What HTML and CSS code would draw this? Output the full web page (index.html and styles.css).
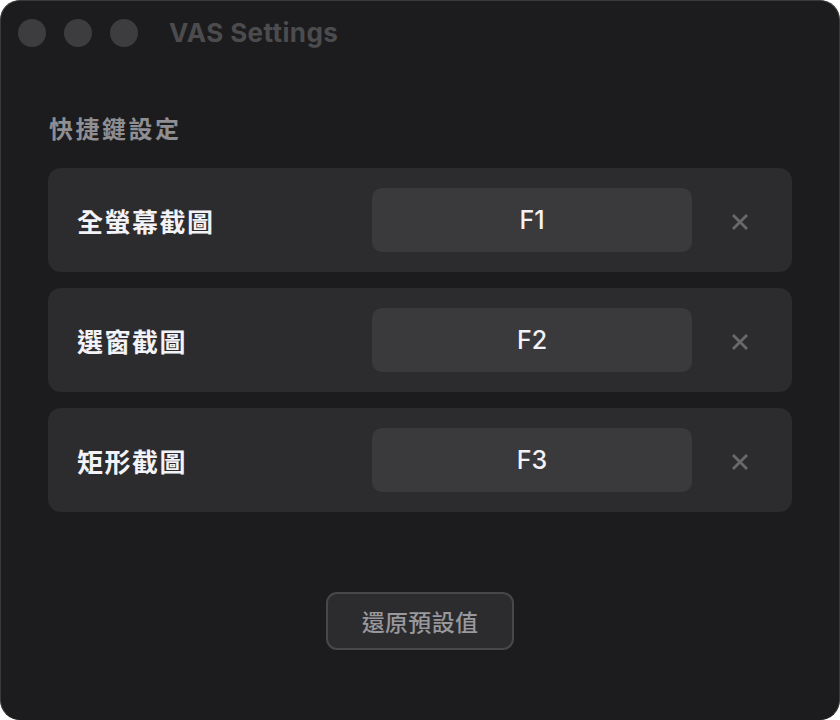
FILE: index.html
```html
<!DOCTYPE html>
<html lang="zh-Hant">
<head>
<meta charset="utf-8">
<title>VAS Settings</title>
<link rel="stylesheet" href="styles.css">
</head>
<body>
<div class="window">
  <header class="titlebar">
    <div class="lights">
      <span class="light"></span>
      <span class="light"></span>
      <span class="light"></span>
    </div>
    <div class="title">VAS Settings</div>
  </header>
  <main class="content">
    <h2 class="section">快捷鍵設定</h2>
    <div class="rows">
      <div class="row">
        <div class="label">全螢幕截圖</div>
        <div class="key">F1</div>
        <button class="clear" aria-label="清除"><svg width="16" height="16" viewBox="0 0 16 16"><path d="M2 2L14 14M14 2L2 14" stroke="#69696c" stroke-width="2.8" stroke-linecap="square" fill="none"/></svg></button>
      </div>
      <div class="row">
        <div class="label">選窗截圖</div>
        <div class="key">F2</div>
        <button class="clear" aria-label="清除"><svg width="16" height="16" viewBox="0 0 16 16"><path d="M2 2L14 14M14 2L2 14" stroke="#69696c" stroke-width="2.8" stroke-linecap="square" fill="none"/></svg></button>
      </div>
      <div class="row">
        <div class="label">矩形截圖</div>
        <div class="key">F3</div>
        <button class="clear" aria-label="清除"><svg width="16" height="16" viewBox="0 0 16 16"><path d="M2 2L14 14M14 2L2 14" stroke="#69696c" stroke-width="2.8" stroke-linecap="square" fill="none"/></svg></button>
      </div>
    </div>
    <div class="footer">
      <button class="reset">還原預設值</button>
    </div>
  </main>
</div>
</body>
</html>
```

FILE: styles.css
```css
html, body {
  margin: 0;
  padding: 0;
  background: #ffffff;
}
body {
  font-family: "Inter", "Noto Sans CJK TC", "Noto Sans", sans-serif;
}
.window {
  width: 840px;
  height: 720px;
  box-sizing: border-box;
  background: #1c1c1e;
  border-radius: 20px;
  border: 1px solid #3a3a3c;
  border-bottom-color: #1c1c1e;
  overflow: hidden;
  display: flex;
  flex-direction: column;
}
.titlebar {
  height: 63px;
  display: flex;
  align-items: center;
  padding-left: 17px;
  flex: none;
}
.lights {
  display: flex;
  gap: 18px;
}
.light {
  width: 28px;
  height: 28px;
  border-radius: 50%;
  background: #3d3d3f;
}
.title {
  margin-left: 31px;
  font-size: 26px;
  font-weight: 700;
  color: #4c4c4e;
  letter-spacing: 0.4px;
}
.content {
  padding: 0 47px;
  display: flex;
  flex-direction: column;
  flex: 1;
}
.section {
  margin: 49px 0 0 1px;
  font-size: 24px;
  line-height: 34px;
  font-weight: 700;
  color: #8e8e93;
  letter-spacing: 2.5px;
}
.rows {
  margin-top: 21px;
  display: flex;
  flex-direction: column;
  gap: 16px;
}
.row {
  height: 104px;
  box-sizing: border-box;
  background: #2c2c2e;
  border-radius: 13px;
  display: flex;
  align-items: center;
  padding-left: 29px;
  padding-right: 4px;
}
.label {
  flex: 1;
  font-size: 26px;
  font-weight: 700;
  color: #f2f2f7;
  letter-spacing: 1.5px;
}
.key {
  width: 320px;
  height: 64px;
  border-radius: 10px;
  background: #3a3a3c;
  color: #f2f2f7;
  font-size: 25px;
  font-weight: 500;
  display: flex;
  align-items: center;
  justify-content: center;
}
.clear {
  width: 96px;
  height: 64px;
  border: none;
  background: transparent;
  padding: 4px 0 0;
  display: flex;
  align-items: center;
  justify-content: center;
}
.footer {
  display: flex;
  justify-content: center;
  margin-top: 80px;
}
.reset {
  width: 188px;
  height: 58px;
  box-sizing: border-box;
  border: 2px solid #48484a;
  border-radius: 11px;
  background: #2c2c2e;
  color: #98989d;
  font-family: "Noto Sans CJK TC", sans-serif;
  font-size: 23px;
  font-weight: 500;
  letter-spacing: 0.3px;
  padding: 0;
}
```
